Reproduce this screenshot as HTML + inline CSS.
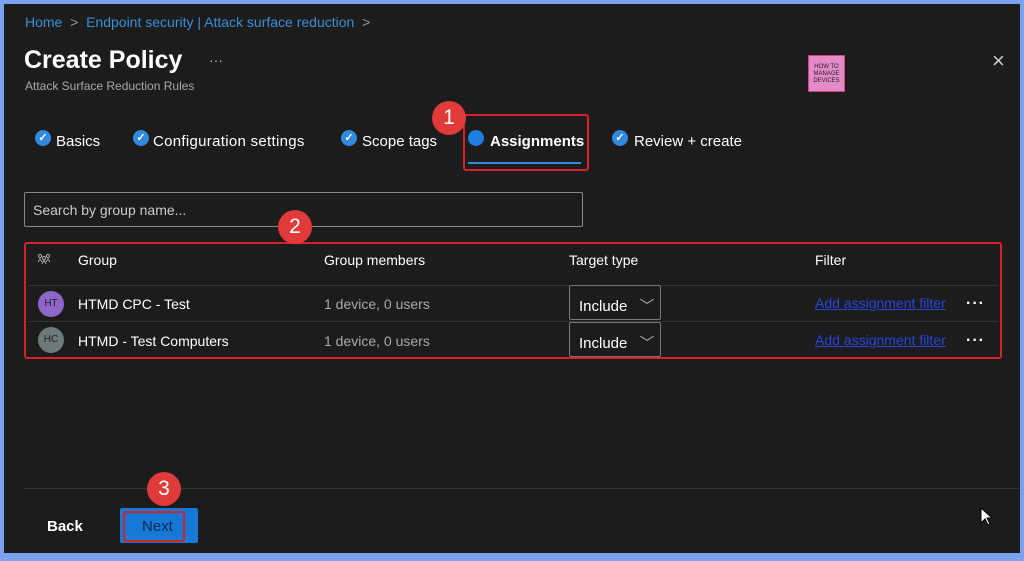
<!DOCTYPE html>
<html><head><style>
*{box-sizing:border-box;margin:0;padding:0}
body{width:1024px;height:561px;background:#7aa2ee;font-family:"Liberation Sans",sans-serif;position:relative;overflow:hidden}
#m{position:absolute;left:4px;top:4px;width:1016px;height:549px;background:#1c1c1c;color:#fff}
.a{position:absolute;white-space:nowrap}
.chk{position:absolute;width:16px;height:16px;border-radius:50%;background:#2f8ae0;color:#fff;font-size:11px;line-height:16px;text-align:center;font-weight:bold}
.badge{position:absolute;width:34px;height:34px;border-radius:50%;background:#e03a3a;color:#fff;font-size:21px;text-align:center;line-height:34px}
.red{position:absolute;border:2px solid #d8222a;border-radius:3px}
.av{position:absolute;width:26px;height:26px;border-radius:50%;font-size:10px;text-align:center;line-height:26px;color:#222}
.sel{position:absolute;width:92px;height:35px;border:1px solid #777;border-radius:2px;font-size:15px;padding:9px 0 0 9px}
.lnk{position:absolute;color:#2a44dd;text-decoration:underline;font-size:14px}
.dots{position:absolute;font-size:16px;font-weight:bold;letter-spacing:1px}
</style></head><body>
<div id="m">
<div class="a" style="left:21px;top:10px;font-size:14px;color:#3a8fd8">Home &nbsp;<span style="color:#999">&gt;</span>&nbsp; Endpoint security | Attack surface reduction &nbsp;<span style="color:#999">&gt;</span></div>
<div class="a" style="left:20px;top:42px;font-size:25px;font-weight:bold">Create Policy</div>
<div class="a" style="left:205px;top:48px;font-size:14px;color:#bbb">···</div>
<div class="a" style="left:21px;top:75px;font-size:12px;color:#aaa">Attack Surface Reduction Rules</div>
<div class="a" style="left:804px;top:51px;width:37px;height:37px;background:#e58ac9;border:1px solid #c48;font-size:6px;color:#222;text-align:center;padding-top:8px;line-height:7px">HOW TO<br>MANAGE<br>DEVICES</div>
<div class="a" style="left:988px;top:44px;font-size:22px;color:#ccc">×</div>
<div class="chk" style="left:31px;top:126px">✓</div><div class="a" style="left:52px;top:129px;font-size:15px">Basics</div>
<div class="chk" style="left:129px;top:126px">✓</div><div class="a" style="left:149px;top:129px;font-size:15px;letter-spacing:0.3px">Configuration settings</div>
<div class="chk" style="left:337px;top:126px">✓</div><div class="a" style="left:358px;top:129px;font-size:15px">Scope tags</div>
<div class="a" style="left:464px;top:126px;width:16px;height:16px;border-radius:50%;background:#1e7ee0"></div>
<div class="a" style="left:486px;top:129px;font-size:15px;font-weight:bold">Assignments</div>
<div class="a" style="left:464px;top:158px;width:113px;height:2px;background:#2f8ae0"></div>
<div class="red" style="left:459px;top:110px;width:126px;height:57px"></div>
<div class="badge" style="left:428px;top:97px">1</div>
<div class="chk" style="left:608px;top:126px">✓</div><div class="a" style="left:630px;top:129px;font-size:15px">Review + create</div>
<div class="a" style="left:20px;top:188px;width:559px;height:35px;border:1px solid #888;border-radius:2px;font-size:14px;color:#ccc;padding:9px 0 0 8px">Search by group name...</div>
<div class="red" style="left:20px;top:238px;width:978px;height:117px"></div>
<div class="badge" style="left:274px;top:206px">2</div>
<svg class="a" style="left:33px;top:249px" width="14" height="12" viewBox="0 0 14 12" fill="none" stroke="#aaa" stroke-width="1"><circle cx="3" cy="3" r="1.6"/><circle cx="11" cy="3" r="1.6"/><circle cx="7" cy="5" r="1.6"/><path d="M1 9l2-3 2 3M9 9l2-3 2 3M5 11l2-4 2 4"/></svg>
<div class="a" style="left:74px;top:248px;font-size:14px">Group</div>
<div class="a" style="left:320px;top:248px;font-size:14px">Group members</div>
<div class="a" style="left:565px;top:248px;font-size:14px">Target type</div>
<div class="a" style="left:811px;top:248px;font-size:14px">Filter</div>
<div class="a" style="left:24px;top:281px;width:970px;height:1px;background:#333"></div>
<div class="a" style="left:24px;top:317px;width:970px;height:1px;background:#333"></div>
<div class="av" style="left:34px;top:287px;background:#8e66c8">HT</div>
<div class="a" style="left:74px;top:292px;font-size:14px">HTMD CPC - Test</div>
<div class="a" style="left:320px;top:292px;font-size:14px;color:#aaa">1 device, 0 users</div>
<div class="sel" style="left:565px;top:281px">Include <span style="color:#aaa;margin-left:8px">﹀</span></div>
<div class="lnk" style="left:811px;top:291px">Add assignment filter</div>
<div class="dots" style="left:962px;top:291px">···</div>
<div class="av" style="left:34px;top:323px;background:#6e7a7a">HC</div>
<div class="a" style="left:74px;top:329px;font-size:14px">HTMD - Test Computers</div>
<div class="a" style="left:320px;top:329px;font-size:14px;color:#aaa">1 device, 0 users</div>
<div class="sel" style="left:565px;top:318px">Include <span style="color:#aaa;margin-left:8px">﹀</span></div>
<div class="lnk" style="left:811px;top:328px">Add assignment filter</div>
<div class="dots" style="left:962px;top:328px">···</div>
<div class="a" style="left:20px;top:484px;width:996px;height:1px;background:#333"></div>
<div class="a" style="left:43px;top:514px;font-size:15px;font-weight:bold">Back</div>
<div class="a" style="left:116px;top:504px;width:78px;height:35px;background:#1679d6;border-radius:2px"></div>
<div class="red" style="left:119px;top:507px;width:62px;height:31px"></div>
<div class="a" style="left:138px;top:514px;font-size:15px;color:#0c2a50">Next</div>
<div class="badge" style="left:143px;top:468px">3</div>
<svg class="a" style="left:976px;top:503px" width="14" height="20" viewBox="0 0 14 20"><path d="M1 1v15l4-4 3 6 2-1-3-6h5z" fill="#fff" stroke="#000" stroke-width="1"/></svg>
</div>
</body></html>
